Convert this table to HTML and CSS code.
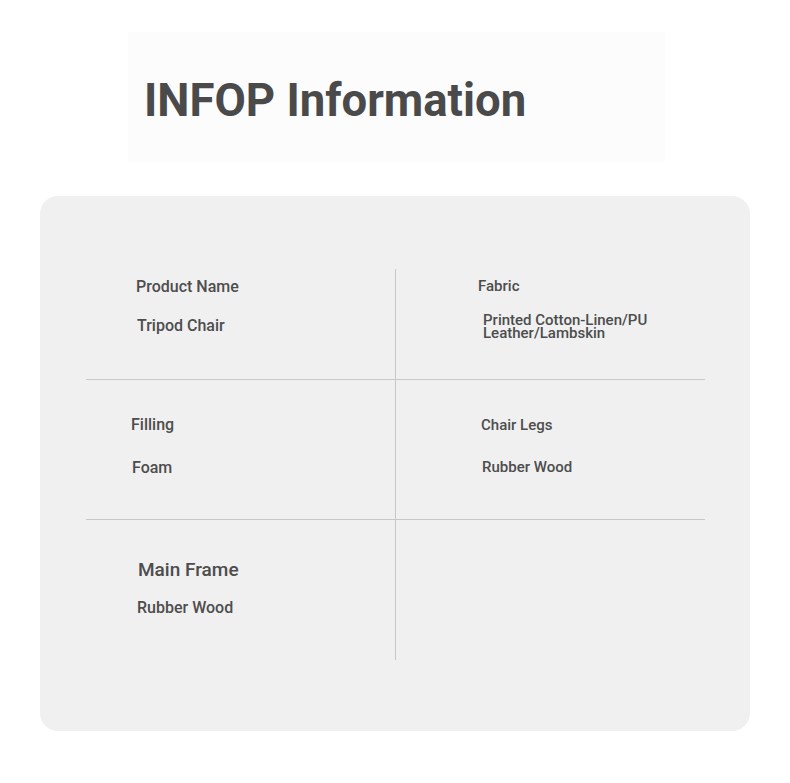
FILE: index.html
```html
<!DOCTYPE html>
<html>
<head>
<meta charset="utf-8">
<link rel="stylesheet" href="styles.css">
</head>
<body>
<header class="hero">
  <h1 class="title">INFOP Information</h1>
</header>
<section class="card">
  <div class="grid">
    <div class="cell c1">
      <div class="label l1">Product Name</div>
      <div class="value v1">Tripod Chair</div>
    </div>
    <div class="cell c2">
      <div class="label l2">Fabric</div>
      <div class="value v2">Printed Cotton-Linen/PU<br>Leather/Lambskin</div>
    </div>
    <div class="cell c3">
      <div class="label l3">Filling</div>
      <div class="value v3">Foam</div>
    </div>
    <div class="cell c4">
      <div class="label l4">Chair Legs</div>
      <div class="value v4">Rubber Wood</div>
    </div>
    <div class="cell c5">
      <div class="label l5">Main Frame</div>
      <div class="value v5">Rubber Wood</div>
    </div>
    <div class="cell c6"></div>
  </div>
</section>
</body>
</html>
```
FILE: styles.css
```css
* { box-sizing: border-box; }
body {
  margin: 0;
  background: #ffffff;
  font-family: Roboto, "Liberation Sans", sans-serif;
  color: #4a4a4a;
}
.hero {
  margin: 32px 0 0 128px;
  width: 537px;
  height: 130px;
  background: #fcfcfc;
  display: flex;
  align-items: center;
  padding: 8px 0 0 16px;
}
.title {
  margin: 0;
  font-size: 45.5px;
  font-weight: 700;
  line-height: 56px;
  color: #4a4a4a;
}
.card {
  margin: 34px 0 0 40px;
  width: 710px;
  height: 535px;
  background: #f0f0f0;
  border-radius: 18px;
  padding: 73px 45px 0 46px;
}
.grid {
  display: grid;
  grid-template-columns: 310px 309px;
  grid-template-rows: 111px 140px 140px;
}
.cell {
  display: flex;
  flex-direction: column;
  align-items: flex-start;
}
.c1, .c3, .c5 { border-right: 1px solid #c8c8c8; }
.c1, .c2, .c3, .c4 { border-bottom: 1px solid #c8c8c8; }
.label, .value {
  font-weight: 500;
  white-space: nowrap;
  color: #4d4d4d;
}
.c1 { padding: 9px 0 0 50px; }
.l1 { font-size: 16px; line-height: 18px; }
.v1 { font-size: 16px; line-height: 18px; margin: 21px 0 0 1px; }
.c2 { padding: 9px 0 0 82px; }
.l2 { font-size: 15px; line-height: 16px; }
.v2 { font-size: 15px; line-height: 13px; margin: 20px 0 0 5px; }
.c3 { padding: 36px 0 0 45px; }
.l3 { font-size: 16px; line-height: 18px; }
.v3 { font-size: 16px; line-height: 18px; margin: 25px 0 0 1px; }
.c4 { padding: 37px 0 0 85px; }
.l4 { font-size: 15px; line-height: 16px; }
.v4 { font-size: 15px; line-height: 16px; margin: 26px 0 0 1px; }
.c5 { padding: 38px 0 0 52px; }
.l5 { font-size: 19px; line-height: 24px; }
.v5 { font-size: 16px; line-height: 18px; margin: 17px 0 0 -1px; }
```
